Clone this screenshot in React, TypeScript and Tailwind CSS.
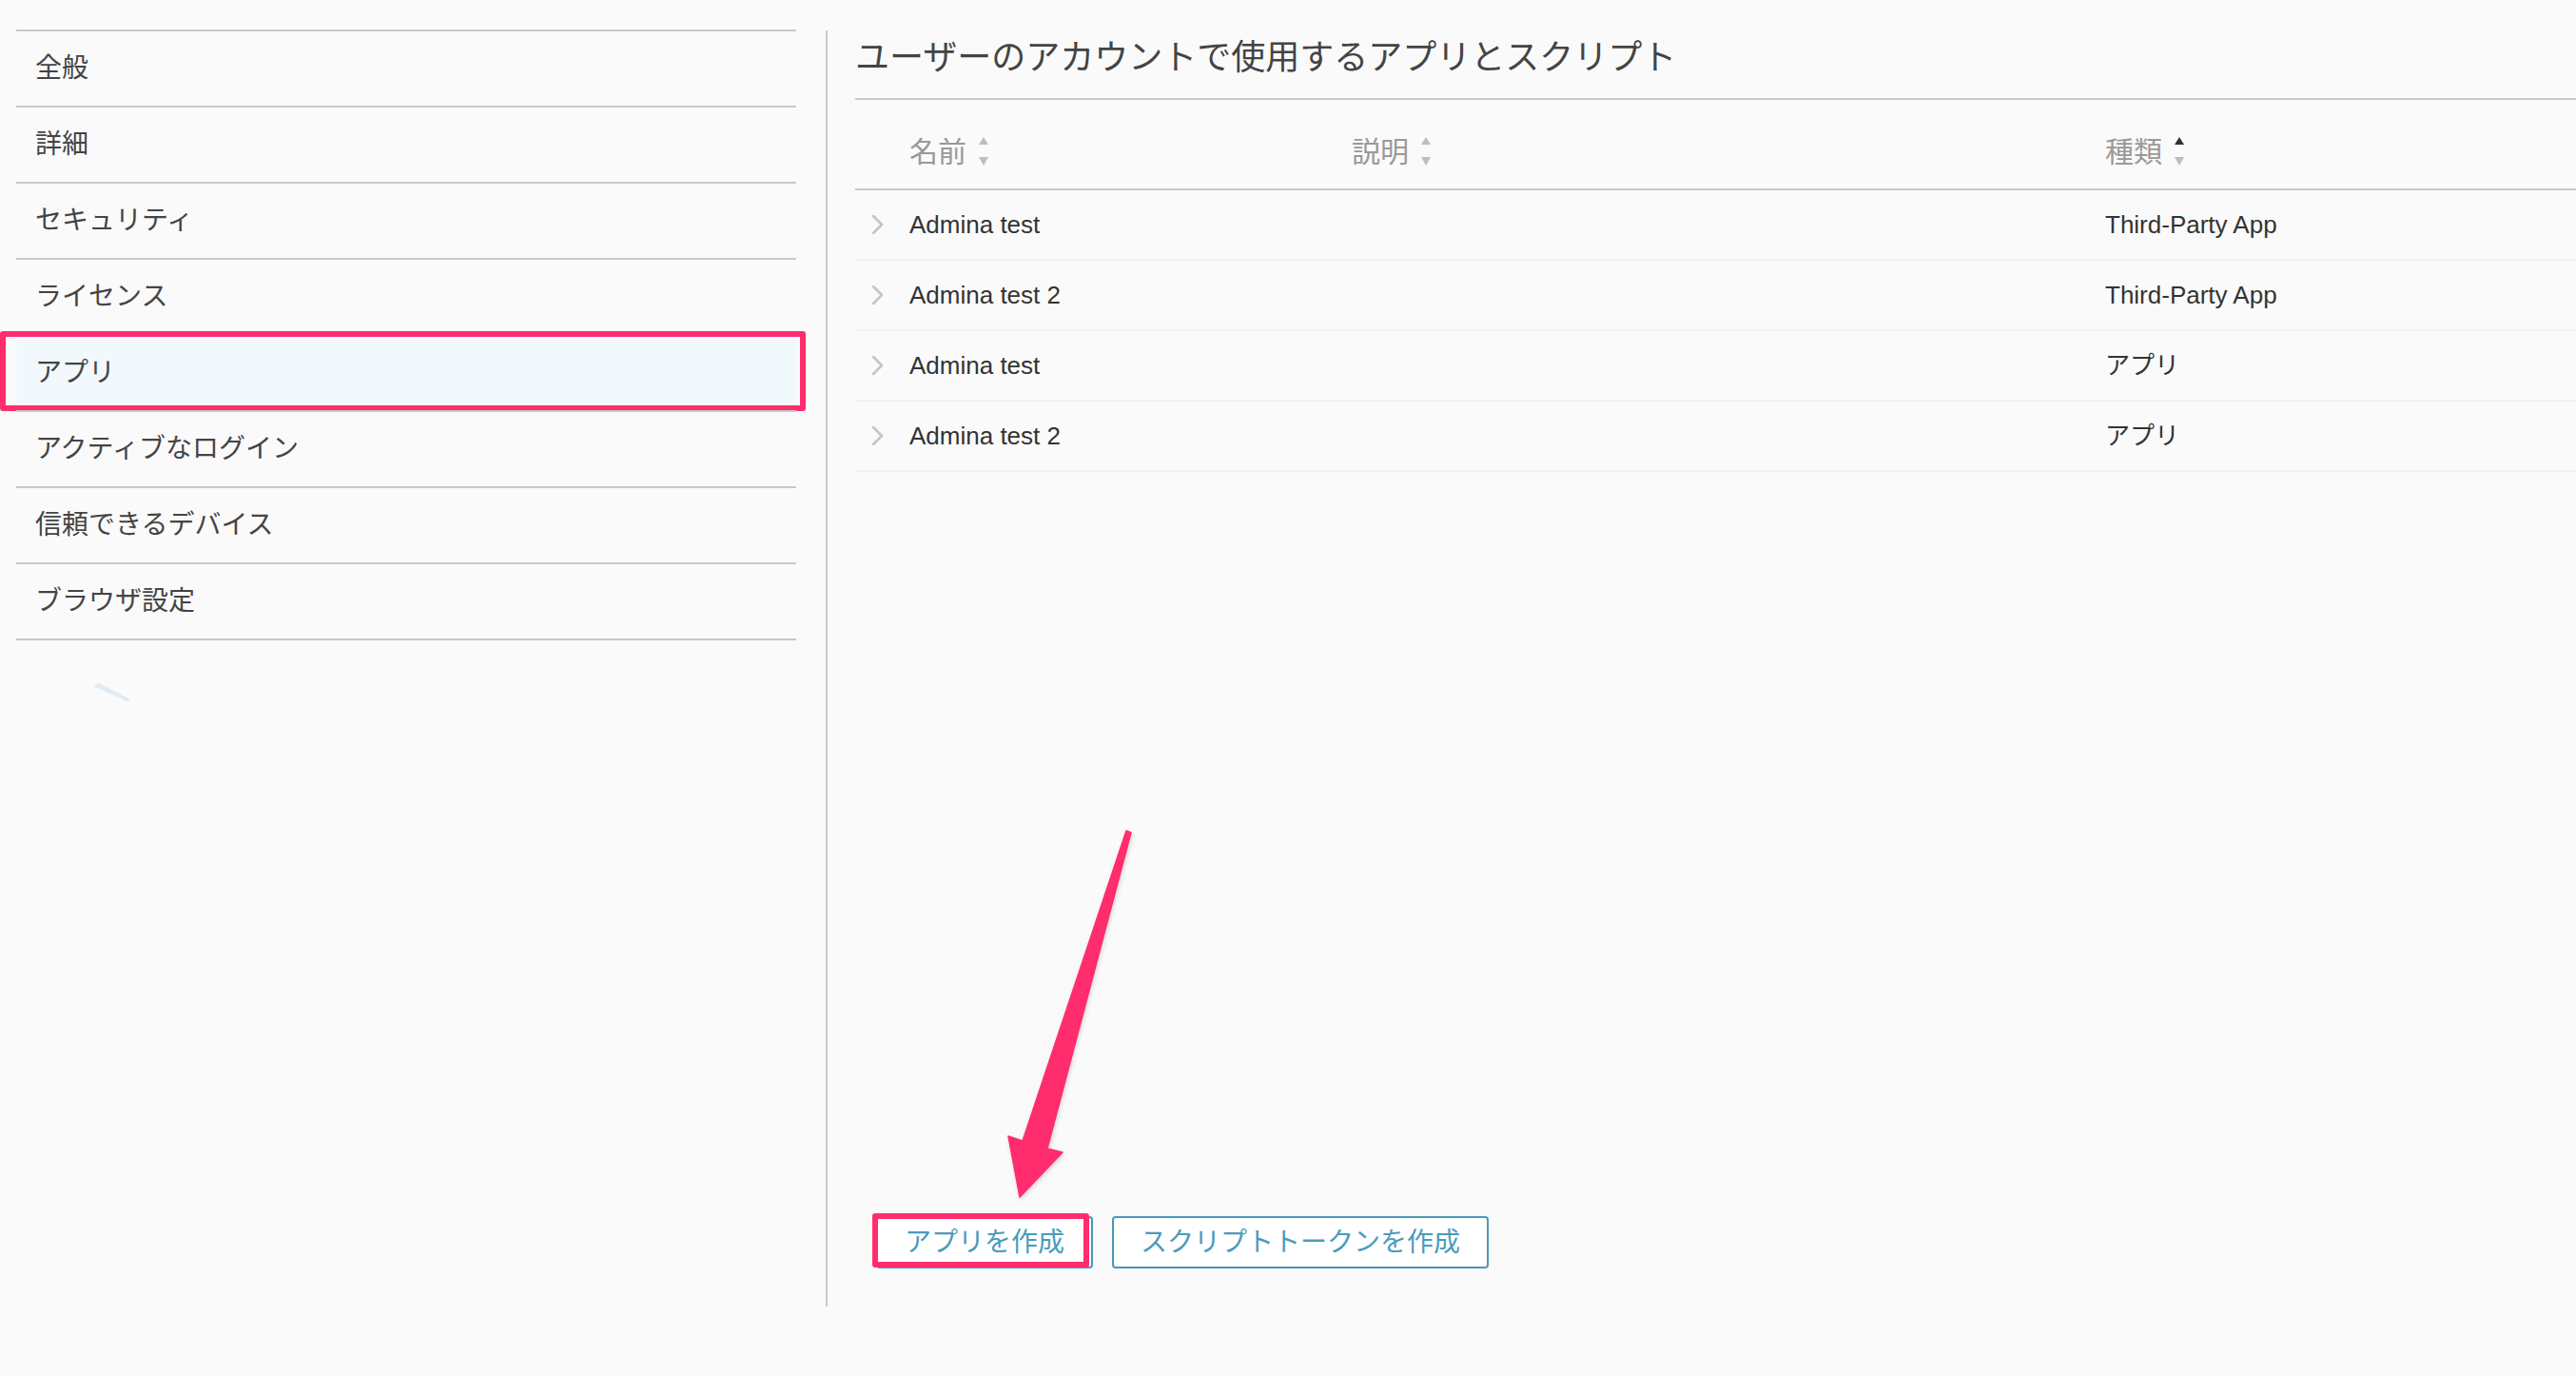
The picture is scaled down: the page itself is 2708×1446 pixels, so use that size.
import React from "react";

const navItems = [
  "全般",
  "詳細",
  "セキュリティ",
  "ライセンス",
  "アプリ",
  "アクティブなログイン",
  "信頼できるデバイス",
  "ブラウザ設定",
];

const apps = [
  { name: "Admina test", type: "Third-Party App" },
  { name: "Admina test 2", type: "Third-Party App" },
  { name: "Admina test", type: "アプリ" },
  { name: "Admina test 2", type: "アプリ" },
];

const font = { fontFamily: '"Liberation Sans", "Noto Sans CJK JP", sans-serif' };

function SortIcon({ active }: { active?: boolean }) {
  return (
    <svg width="12" height="32" viewBox="0 0 12 32" className="ml-[12px]">
      <polygon points="6,0 11,8 1,8" fill={active ? "#333333" : "#bdbdbd"} />
      <polygon points="1,21 11,21 6,30" fill="#bdbdbd" />
    </svg>
  );
}

function Chevron() {
  return (
    <svg width="14" height="20" viewBox="0 0 14 20">
      <polyline
        points="2,1 11,10 2,19"
        fill="none"
        stroke="#c4c4c4"
        strokeWidth="2.6"
        strokeLinecap="round"
        strokeLinejoin="round"
      />
    </svg>
  );
}

export default function App() {
  return (
    <div className="relative flex w-[2708px] h-[1446px] bg-[#fafafa] overflow-hidden" style={font}>
      {/* sidebar */}
      <div className="relative w-[868px] shrink-0 pt-[31px]">
        <ul className="ml-[17px] w-[820px] border-b-2 border-[#c8c8c8]">
          {navItems.map((item) => {
            const active = item === "アプリ";
            return (
              <li
                key={item}
                className={
                  "relative h-[80px] flex items-center pl-[20px] border-t-2 border-[#c8c8c8] text-[28px] text-[#444]" +
                  (active ? " bg-[#f2f9fd]" : "")
                }
              >
                {item}
                {active && (
                  <div className="absolute -left-[17px] -right-[10px] -top-[5px] -bottom-[1px] border-[6px] border-[#ff2d6d] rounded-[3px]" />
                )}
              </li>
            );
          })}
        </ul>
        <svg className="absolute left-[96px] top-[716px]" width="44" height="24" viewBox="96 716 44 24">
          <polygon points="98,721 104,718 137,735 134,737" fill="#e1ebf3" />
        </svg>
      </div>

      {/* main */}
      <div className="flex flex-col flex-1 mt-[32px] h-[1341px] border-l-2 border-[#c8c8c8] pl-[29px]">
        <div className="h-[73px] pt-[11px] border-b-2 border-[#c8c8c8]">
          <h1 className="text-[36px] leading-[36px] text-[#444]">ユーザーのアカウントで使用するアプリとスクリプト</h1>
        </div>

        <div className="grid grid-cols-[57px_465px_792px_1fr] content-start h-[95px] pt-[39px] border-b-2 border-[#c8c8c8] text-[30px] leading-[32px] text-[#999]">
          <div />
          <div className="flex items-center">
            名前
            <SortIcon />
          </div>
          <div className="flex items-center">
            説明
            <SortIcon />
          </div>
          <div className="flex items-center">
            種類
            <SortIcon active />
          </div>
        </div>

        {apps.map((app, i) => (
          <div
            key={i}
            className="grid grid-cols-[57px_465px_792px_1fr] items-center h-[74px] border-b-2 border-[#eef0f3] text-[26px] text-[#333]"
          >
            <div className="pl-[17px] flex items-center">
              <Chevron />
            </div>
            <div>{app.name}</div>
            <div />
            <div>{app.type}</div>
          </div>
        ))}

        <div className="flex-1" />

        <div className="flex gap-[20px] ml-[22px] mb-[40px]">
          <button className="relative h-[55px] px-[28px] border-2 border-[#4a97b8] rounded-[4px] bg-white text-[28px] text-[#4a9bbd]">
            アプリを作成
            <span className="absolute -left-[6px] -top-[5px] right-[2px] -bottom-[1px] border-[6px] border-[#ff2d6d] rounded-[3px]" />
          </button>
          <button className="h-[55px] px-[28px] border-2 border-[#4a97b8] rounded-[4px] bg-white text-[28px] text-[#4a9bbd]">
            スクリプトトークンを作成
          </button>
        </div>
      </div>

      {/* annotation arrow */}
      <svg
        className="absolute left-[1040px] top-[860px] pointer-events-none"
        width="170"
        height="410"
        viewBox="1040 860 170 410"
        style={{ filter: "drop-shadow(1px 2px 2px rgba(0,0,0,0.15))" }}
      >
        <polygon
          points="1184,873 1189,875 1101,1207 1117,1211 1072,1258 1060,1194 1075,1199"
          fill="#ff2d6d"
          stroke="#ff2d6d"
          strokeWidth="1.5"
          strokeLinejoin="round"
        />
      </svg>
    </div>
  );
}
